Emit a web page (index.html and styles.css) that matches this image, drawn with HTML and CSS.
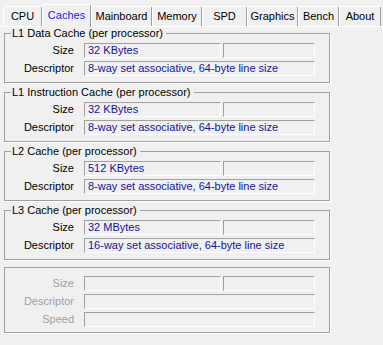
FILE: index.html
```html
<!DOCTYPE html>
<html>
<head>
<meta charset="utf-8">
<link rel="stylesheet" href="styles.css">
</head>
<body>
<div class="tabs">
  <div class="tab w-cpu">CPU</div>
  <div class="tab w-caches active">Caches</div>
  <div class="tab w-main">Mainboard</div>
  <div class="tab w-mem">Memory</div>
  <div class="tab w-spd">SPD</div>
  <div class="tab w-gfx">Graphics</div>
  <div class="tab w-bench">Bench</div>
  <div class="tab w-about">About</div>
</div>
<div class="panel">
  <fieldset class="group">
    <legend>L1 Data Cache (per processor)</legend>
    <div class="row"><span class="label">Size</span><span class="field f-size">32 KBytes</span><span class="field f-extra"></span></div>
    <div class="row"><span class="label">Descriptor</span><span class="field f-wide">8-way set associative, 64-byte line size</span></div>
  </fieldset>
  <fieldset class="group">
    <legend>L1 Instruction Cache (per processor)</legend>
    <div class="row"><span class="label">Size</span><span class="field f-size">32 KBytes</span><span class="field f-extra"></span></div>
    <div class="row"><span class="label">Descriptor</span><span class="field f-wide">8-way set associative, 64-byte line size</span></div>
  </fieldset>
  <fieldset class="group">
    <legend>L2 Cache (per processor)</legend>
    <div class="row"><span class="label">Size</span><span class="field f-size">512 KBytes</span><span class="field f-extra"></span></div>
    <div class="row"><span class="label">Descriptor</span><span class="field f-wide">8-way set associative, 64-byte line size</span></div>
  </fieldset>
  <fieldset class="group">
    <legend>L3 Cache (per processor)</legend>
    <div class="row"><span class="label">Size</span><span class="field f-size">32 MBytes</span><span class="field f-extra"></span></div>
    <div class="row"><span class="label">Descriptor</span><span class="field f-wide">16-way set associative, 64-byte line size</span></div>
  </fieldset>
  <fieldset class="group disabled">
    <div class="row"><span class="label">Size</span><span class="field f-size"></span><span class="field f-extra"></span></div>
    <div class="row"><span class="label">Descriptor</span><span class="field f-wide"></span></div>
    <div class="row"><span class="label">Speed</span><span class="field f-wide"></span></div>
  </fieldset>
</div>
</body>
</html>
```
FILE: styles.css
```css
html, body {
  margin: 0;
  padding: 0;
  background: #f0f0f0;
}
body {
  font-family: "Liberation Sans", Arial, sans-serif;
  font-size: 11px;
  color: #000;
  width: 383px;
  height: 345px;
  overflow: hidden;
}
.tabs {
  display: flex;
  align-items: flex-end;
  height: 26px;
  padding-left: 3px;
}
.tab {
  box-sizing: border-box;
  height: 20px;
  border-left: 1px solid #fff;
  border-top: 1px solid #fff;
  border-right: 1px solid #a0a0a0;
  border-radius: 2px 2px 0 0;
  text-align: center;
  line-height: 19px;
  white-space: nowrap;
}
.tab.active {
  height: 23px;
  margin-bottom: -1px;
  line-height: 20px;
  color: #1c1cf0;
  background: #f0f0f0;
  position: relative;
  z-index: 1;
}
.w-cpu { width: 39px; }
.w-caches { width: 49px; }
.w-main { width: 61px; }
.w-mem { width: 50px; }
.w-spd { width: 45px; }
.w-gfx { width: 51px; }
.w-bench { width: 41px; }
.w-about { width: 42px; }

.panel {
  border-top: 1px solid #fff;
  padding-left: 4px;
}
.group {
  box-sizing: border-box;
  width: 326px;
  min-width: 0;
  margin: 0 0 3px 0;
  padding: 3px 0 6px 0;
  border: 1px solid #a0a0a0;
  box-shadow: 1px 1px 0 #fff;
  display: flex;
  flex-direction: column;
  gap: 3px;
}
.group legend {
  margin-left: 6px;
  padding: 0 3px 0 1px;
  line-height: 13px;
}
.group.disabled {
  margin-top: 7px;
  padding: 8px 0 5px 0;
}
.row {
  display: flex;
  align-items: center;
  height: 15px;
}
.label {
  width: 69px;
  margin-right: 10px;
  text-align: right;
  line-height: 15px;
  white-space: nowrap;
}
.disabled .label {
  color: #a0a0a0;
}
.field {
  box-sizing: border-box;
  height: 15px;
  border-top: 1px solid #a0a0a0;
  border-left: 1px solid #a0a0a0;
  border-bottom: 1px solid #fff;
  border-right: 1px solid #fff;
  padding-left: 3px;
  line-height: 13px;
  color: #14149b;
  white-space: nowrap;
  overflow: hidden;
}
.f-size { width: 137px; }
.f-extra { width: 92px; margin-left: 2px; }
.f-wide { width: 231px; }
```
